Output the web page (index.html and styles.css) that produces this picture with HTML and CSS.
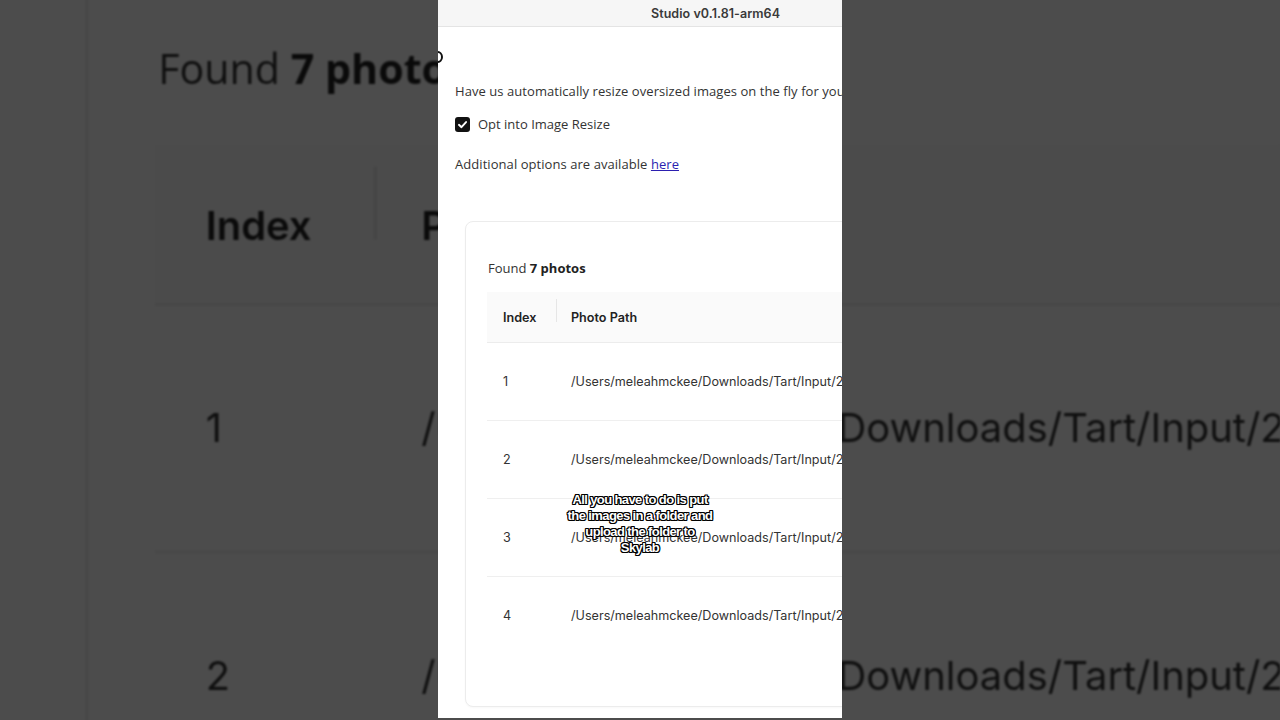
FILE: index.html
```html
<!DOCTYPE html>
<html lang="en">
<head>
<meta charset="utf-8">
<title>Studio v0.1.81-arm64</title>
<link rel="stylesheet" href="styles.css">
</head>
<body>
  <div class="backdrop" aria-hidden="true">
    <div class="frame frame-bg">
      <div class="window">
        <div class="titlebar"><span class="title">Studio v0.1.81-arm64</span></div>
        <div class="content">
          <p class="text">Have us automatically resize oversized images on the fly for you</p>
          <div class="check-row"><span class="checkbox"></span><span>Opt into Image Resize</span></div>
          <p class="text more">Additional options are available <a class="link">here</a></p>
          <div class="card">
            <p class="found">Found <b>7 photos</b></p>
            <div class="table">
              <div class="row head"><div class="cell">Index</div><div class="cell sep">Photo Path</div></div>
              <div class="row"><div class="cell">1</div><div class="cell">/Users/meleahmckee/Downloads/Tart/Input/2</div></div>
              <div class="row"><div class="cell">2</div><div class="cell">/Users/meleahmckee/Downloads/Tart/Input/2</div></div>
              <div class="row"><div class="cell">3</div><div class="cell">/Users/meleahmckee/Downloads/Tart/Input/2</div></div>
              <div class="row last"><div class="cell">4</div><div class="cell">/Users/meleahmckee/Downloads/Tart/Input/2</div></div>
            </div>
          </div>
        </div>
      </div>
    </div>
  </div>

  <main class="frame frame-main">
    <div class="window">
      <div class="titlebar"><span class="title">Studio v0.1.81-arm64</span></div>
      <div class="content">
        <p class="text">Have us automatically resize oversized images on the fly for you</p>
        <label class="check-row">
          <span class="checkbox">
            <svg viewBox="0 0 16 16" width="15" height="15"><path d="M4.2 8.3 L6.9 10.9 L11.8 5.4" fill="none" stroke="#fff" stroke-width="2" stroke-linecap="round" stroke-linejoin="round"/></svg>
          </span>
          <span>Opt into Image Resize</span>
        </label>
        <p class="text more">Additional options are available <a class="link" href="#">here</a></p>
        <section class="card">
          <p class="found">Found <b>7 photos</b></p>
          <div class="table">
            <div class="row head"><div class="cell">Index</div><div class="cell sep">Photo Path</div></div>
            <div class="row"><div class="cell">1</div><div class="cell">/Users/meleahmckee/Downloads/Tart/Input/2</div></div>
            <div class="row"><div class="cell">2</div><div class="cell">/Users/meleahmckee/Downloads/Tart/Input/2</div></div>
            <div class="row"><div class="cell">3</div><div class="cell">/Users/meleahmckee/Downloads/Tart/Input/2</div></div>
            <div class="row last"><div class="cell">4</div><div class="cell">/Users/meleahmckee/Downloads/Tart/Input/2</div></div>
          </div>
        </section>
      </div>
    </div>
    <span class="cursor-ring"></span>
    <div class="caption">All you have to do is put<br>the images in a folder and<br>upload the folder to<br>Skylab</div>
  </main>
</body>
</html>
```

FILE: styles.css
```css
* { box-sizing: border-box; }

html, body {
  margin: 0;
  padding: 0;
}

body {
  width: 1280px;
  height: 720px;
  overflow: hidden;
  position: relative;
  background: #4d4d4d;
  display: flex;
  justify-content: center;
  align-items: flex-start;
  font-family: "Open Sans", "Noto Sans", sans-serif;
  color: #333;
}

/* blurred, enlarged copy of the video frame behind it */
.backdrop {
  position: absolute;
  inset: 0;
  overflow: hidden;
  z-index: 0;
  display: flex;
  justify-content: center;
}

.frame-bg {
  transform: scale(3.17);
  transform-origin: 202px 360px;
  filter: brightness(0.3) blur(0.35px);
}

.frame {
  width: 404px;
  height: 718px;
  background: #fff;
  overflow: hidden;
  flex: none;
}

.frame-main {
  position: relative;
  z-index: 1;
}

.window {
  width: 556px;
}

.titlebar {
  height: 27px;
  background: #f6f6f6;
  border-bottom: 1px solid #e4e4e4;
  display: flex;
  align-items: center;
  padding-left: 213px;
}

.title {
  font-family: "Inter", "Liberation Sans", sans-serif;
  font-weight: 600;
  font-size: 12.5px;
  color: #3a3a3a;
  letter-spacing: 0.05px;
}

.content {
  padding: 54px 0 0 17px;
}

.text {
  margin: 0;
  font-size: 13px;
  line-height: 20px;
  letter-spacing: 0.06px;
  white-space: nowrap;
  color: #333;
}

.check-row {
  margin-top: 13px;
  height: 20px;
  display: flex;
  align-items: center;
  gap: 8px;
  font-size: 13px;
  color: #333;
}

.checkbox {
  width: 15px;
  height: 15px;
  border-radius: 3px;
  background: #111;
  display: flex;
  align-items: center;
  justify-content: center;
}

.checkbox svg { display: block; }

.more { margin-top: 20px; }

.link {
  color: #2c1fb0;
  text-decoration: underline;
}

.card {
  margin: 47px 0 0 10px;
  width: 560px;
  border: 1px solid #ececec;
  border-radius: 8px;
  background: #fff;
  padding: 36px 0 52px 21px;
  box-shadow: 0 1px 2px rgba(0, 0, 0, 0.03);
}

.found {
  margin: 0 0 14px 1px;
  font-size: 13px;
  line-height: 20px;
  color: #333;
}

.found b { font-weight: 700; color: #222; }

.table {
  font-family: "Inter", "Liberation Sans", sans-serif;
  font-size: 12.6px;
  color: #333;
}

.row {
  display: grid;
  grid-template-columns: 69px 1fr;
  height: 78px;
  align-items: center;
  border-bottom: 1px solid #efefef;
}

.row.last { border-bottom: none; height: 77px; }

.row.head {
  height: 51px;
  background: #fafafa;
  font-weight: 600;
  color: #222;
  border-bottom: 1px solid #ececec;
}

.cell {
  padding-left: 16px;
  white-space: nowrap;
}

.cell + .cell { padding-left: 15px; }

.cell.sep {
  position: relative;
}

.cell.sep::before {
  content: "";
  position: absolute;
  left: 0;
  top: -11px;
  width: 1px;
  height: 23px;
  background: #e6e6e6;
}

.cursor-ring {
  position: absolute;
  left: -6px;
  top: 51px;
  width: 11px;
  height: 12px;
  border: 2.5px solid #111;
  border-radius: 50%;
}

.caption {
  position: absolute;
  left: 0;
  right: 0;
  top: 492px;
  text-align: center;
  font-family: "Liberation Sans", Arial, sans-serif;
  font-weight: 700;
  font-size: 13px;
  line-height: 16px;
  letter-spacing: -0.6px;
  color: #fff;
  text-shadow:
    1px 0 0 #000, -1px 0 0 #000, 0 1px 0 #000, 0 -1px 0 #000,
    1px 1px 0 #000, -1px -1px 0 #000, 1px -1px 0 #000, -1px 1px 0 #000;
}
```
